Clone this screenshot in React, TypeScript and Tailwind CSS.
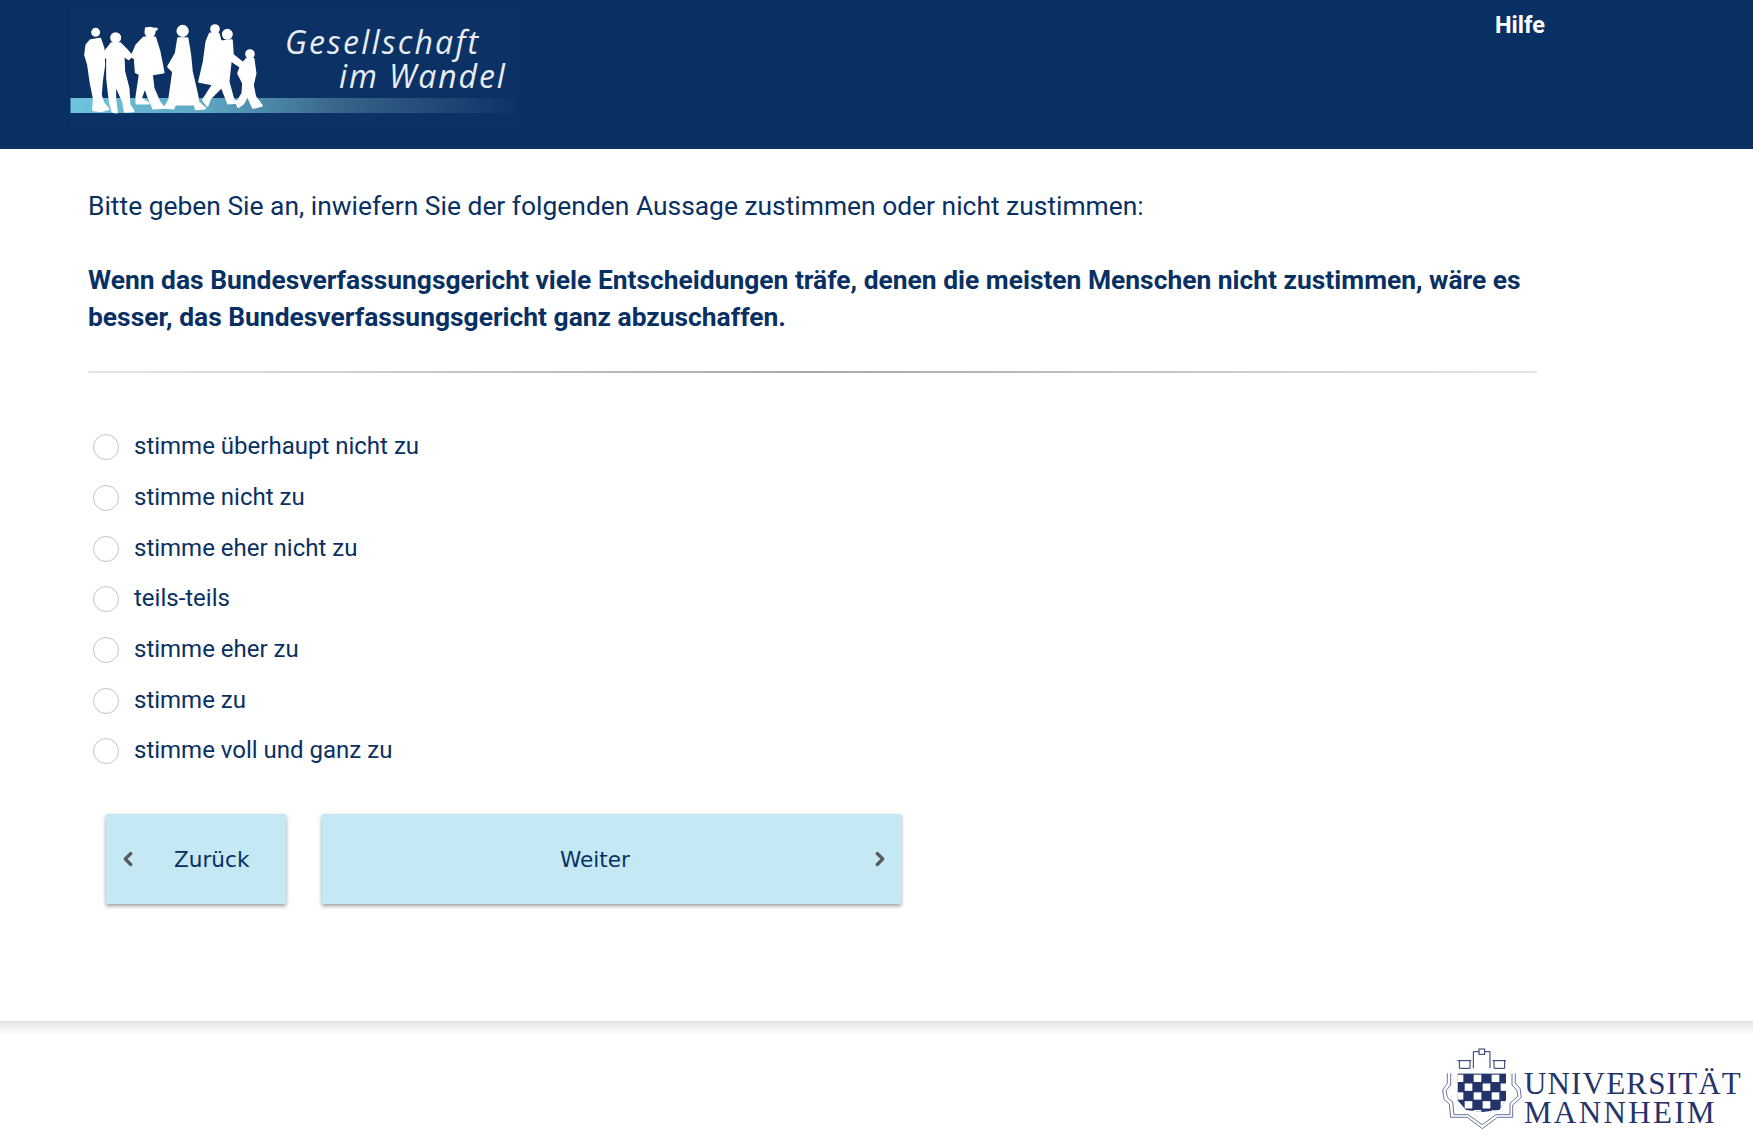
import { ChevronLeft, ChevronRight } from "lucide-react";

const options = [
  "stimme überhaupt nicht zu",
  "stimme nicht zu",
  "stimme eher nicht zu",
  "teils-teils",
  "stimme eher zu",
  "stimme zu",
  "stimme voll und ganz zu",
];

const ProjectLogo = () => (
  <svg viewBox="0 0 450 122" className="w-[450px] h-[122px] block">
    <defs>
      <linearGradient id="bar" x1="0" x2="1" y1="0" y2="0">
        <stop offset="0" stopColor="#6fc4de" />
        <stop offset="0.3" stopColor="#5fa8c4" />
        <stop offset="0.6" stopColor="#38658a" />
        <stop offset="1" stopColor="#0d3366" />
      </linearGradient>
      <filter id="soft">
        <feGaussianBlur stdDeviation="0.5" />
      </filter>
    </defs>
    <rect x="0" y="0" width="450" height="122" fill="#0c3265" />
    <rect x="0.5" y="90" width="445" height="15" fill="url(#bar)" />
    <g transform="translate(0 7) scale(.3333)" fill="#fff" stroke="#fff" strokeWidth="7" strokeLinejoin="round" filter="url(#soft)">
      <circle cx="77" cy="52" r="10" />
      <path d="M62 76L90 72L100 100L102 150L95 200L92 240L100 265L115 282L95 288L70 285L72 250L62 200L55 150L46 120L50 90Z" />
      <circle cx="137" cy="68" r="13" />
      <path d="M125 85L150 85L170 105L185 122L176 132L160 120L162 170L175 220L178 270L190 288L165 290L160 260L135 205L135 250L140 292L128 290L120 260L112 190L112 130L98 120Z" />
      <circle cx="240" cy="52" r="13" />
      <path d="M228 40L260 42L250 50L228 50Z" />
      <path d="M222 68L255 68L268 110L280 172L245 178L250 220L268 262L282 278L250 280L235 245L225 215L212 250L235 265L200 265L200 245L210 178L198 172L195 130L185 125L200 90Z" />
      <circle cx="338" cy="48" r="15" />
      <path d="M325 70L352 70L360 120L365 170L380 235L385 262L405 280L378 282L375 268L315 268L310 280L285 278L298 255L310 170L295 155L318 115Z" />
      <circle cx="435" cy="42" r="11" />
      <circle cx="472" cy="58" r="13" />
      <path d="M420 56L445 56L452 80L485 76L488 120L520 145L512 155L482 135L475 200L490 255L505 262L475 265L455 215L420 250L412 272L400 255L430 208L388 200L402 140L410 80Z" />
      <circle cx="540" cy="117" r="11" />
      <path d="M530 132L550 132L556 175L548 210L555 245L575 272L550 278L532 240L520 265L505 275L500 265L518 235L520 205L505 175L515 150Z" />
    </g>
    <text x="215" y="46" fill="#e8edf3" fontFamily="'Open Sans', sans-serif" fontStyle="italic" fontSize="32" letterSpacing="2.2">
      Gesellschaft
    </text>
    <text x="269" y="80" fill="#e8edf3" fontFamily="'Open Sans', sans-serif" fontStyle="italic" fontSize="32" letterSpacing="1.9">
      im Wandel
    </text>
  </svg>
);

const Crest = () => (
  <svg viewBox="0 0 300 270" className="w-[100px] h-[90px] block shrink-0">
    <defs>
      <clipPath id="shield">
        <path d="M70 100H216V180L196 210L145 216L96 210L70 180Z" />
      </clipPath>
    </defs>
    <g clipPath="url(#shield)">
      <rect x="70" y="100" width="150" height="120" fill="#24346a" />
      {[0, 1, 2, 3, 4].flatMap((row) =>
        [0, 1, 2, 3, 4, 5].map((col) =>
          (row + col) % 2 === 0 ? (
            <rect
              key={`${row}-${col}`}
              x={65 + col * 27}
              y={104 + row * 26.5}
              width={23}
              height={22}
              fill="#fff"
            />
          ) : null,
        ),
      )}
    </g>
    <g fill="none" stroke="#24346a" strokeWidth="3">
      <path d="M70 62H112M76 62V85H108V62" />
      <path d="M118 85V35H135M152 35H168V85" />
      <rect x="135" y="27" width="17" height="16" />
      <path d="M176 62H216M180 62V85H212V62" />
    </g>
    <g fill="none" stroke="#4a5888" strokeWidth="2.5">
      <path d="M40 100V130L26 150L30 178L46 192L50 232H100L145 266L190 232H236V195L262 172L258 145L244 130V100" />
      <path d="M50 100V135L36 152L40 172L56 186L60 224H102L145 254L186 224H228V190L252 168L248 150L234 135V100" />
    </g>
  </svg>
);

export default function App() {
  return (
    <div className="min-h-[1137px] bg-white font-['Roboto',sans-serif] text-[#093063]">
      <header className="h-[149px] bg-[#093063] flex items-start">
        <div className="ml-[70px] mt-[8px]">
          <ProjectLogo />
        </div>
        <a className="ml-[975px] mt-[10px] text-[23.5px] leading-[30px] font-bold text-white">Hilfe</a>
      </header>

      <main className="h-[872px] pl-[88px] pt-[39px]">
        <p className="text-[26.4px] leading-[37px]">
          Bitte geben Sie an, inwiefern Sie der folgenden Aussage zustimmen oder nicht zustimmen:
        </p>
        <p className="mt-[37px] w-[1450px] text-[26.4px] leading-[37px] font-bold">
          Wenn das Bundesverfassungsgericht viele Entscheidungen träfe, denen die meisten Menschen nicht zustimmen, wäre es besser, das Bundesverfassungsgericht ganz abzuschaffen.
        </p>
        <div className="mt-[35px] h-[2px] w-[1449px] bg-gradient-to-r from-[#e6e6e6] via-[#a8a8a8] to-[#e6e6e6]" />

        <div className="mt-[49px] flex flex-col">
          {options.map((label) => (
            <label key={label} className="h-[50.7px] flex items-center pl-[5px]">
              <span className="w-[26px] h-[26px] rounded-full border border-[#c4c4c4] bg-white shrink-0" />
              <span className="ml-[15px] text-[24px] leading-[37px] -mt-[1px]">{label}</span>
            </label>
          ))}
        </div>

        <div className="mt-[37px] ml-[18px] flex gap-[36px] font-['DejaVu_Sans',sans-serif] text-[21.6px]">
          <button className="relative w-[180px] h-[90px] bg-[#c5e8f5] shadow-[0_2px_4px_rgba(0,0,0,0.4)] pl-[68px] pt-[2px] text-left">
            <ChevronLeft className="absolute left-[11px] top-[34px] w-[22px] h-[22px] text-[#5a5a5a]" strokeWidth={3.5} />
            Zurück
          </button>
          <button className="relative w-[579px] h-[90px] bg-[#c5e8f5] shadow-[0_2px_4px_rgba(0,0,0,0.4)] pr-[33px] pt-[2px] text-center">
            Weiter
            <ChevronRight className="absolute right-[10px] top-[34px] w-[22px] h-[22px] text-[#5a5a5a]" strokeWidth={3.5} />
          </button>
        </div>
      </main>

      <footer className="h-[116px] bg-gradient-to-b from-[#e4e4e4] to-white to-[14px] flex justify-end items-start pt-[19px] pr-[11px]">
        <Crest />
        <div className="-ml-[10px] mt-[29px] font-['Liberation_Serif',serif] text-[31px] leading-[29px] text-[#24346a]">
          <div className="tracking-[1.2px]">UNIVERSITÄT</div>
          <div className="tracking-[2.4px]">MANNHEIM</div>
        </div>
      </footer>
    </div>
  );
}
